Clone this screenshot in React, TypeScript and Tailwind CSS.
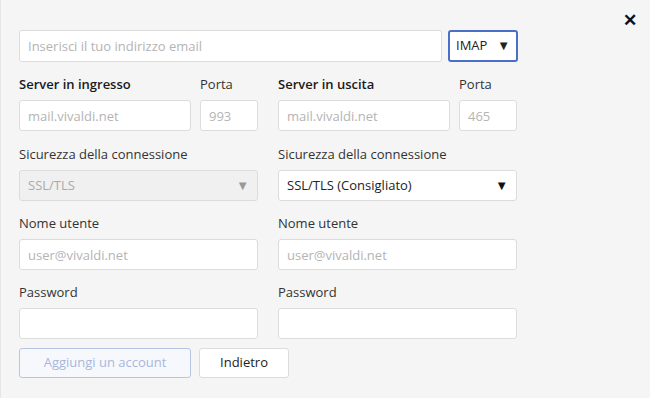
import React from 'react';

const input =
  'h-full w-full rounded-[3px] border border-[#dcdcdc] bg-white px-2 text-[13px] text-[#222] placeholder-[#b4b4b4] outline-none';

function Field({ label, placeholder, bold }: { label: string; placeholder?: string; bold?: boolean }) {
  return (
    <div className="flex flex-1 flex-col">
      <div className={`h-[30px] pt-[5px] text-[13px] ${bold ? 'font-semibold text-[#1a1a1a]' : 'text-[#333]'}`}>{label}</div>
      <div className="h-[31px]">
        <input className={input} placeholder={placeholder} />
      </div>
    </div>
  );
}

function Select({ value, disabled }: { value: string; disabled?: boolean }) {
  return (
    <div
      className={`flex h-[31px] items-center justify-between rounded-[3px] border border-[#dcdcdc] px-2 text-[13px] ${
        disabled ? 'bg-[#f0f0f0] text-[#aaa]' : 'bg-white text-[#222]'
      }`}
    >
      <span>{value}</span>
      <span className={`text-[13px] ${disabled ? 'text-[#999]' : 'text-[#111]'}`}>▼</span>
    </div>
  );
}

function Column({ server }: { server: string }) {
  const sel = server === 'Server in ingresso';
  return (
    <div className="flex w-[239px] flex-col">
      <div className="flex gap-[9px]">
        <div className="w-[172px]"><Field label={server} placeholder="mail.vivaldi.net" bold /></div>
        <Field label="Porta" placeholder={sel ? '993' : '465'} />
      </div>
      <div className="mt-[9px] h-[30px] pt-[5px] text-[13px] text-[#333]">Sicurezza della connessione</div>
      <Select value={sel ? 'SSL/TLS' : 'SSL/TLS (Consigliato)'} disabled={sel} />
      <div className="mt-[8px]"><Field label="Nome utente" placeholder="user@vivaldi.net" /></div>
      <div className="mt-[8px]"><Field label="Password" /></div>
    </div>
  );
}

export default function App() {
  return (
    <div
      className="relative h-[398px] w-[650px] border-l border-[#e6e6e6] bg-[#f5f5f5] px-[18px] pt-[30px]"
      style={{ fontFamily: '"Open Sans", sans-serif' }}
    >
      <button className="absolute right-[13px] top-[7px] text-[17px] font-bold text-[#111]">✕</button>
      <div className="flex gap-[6px]">
        <div className="h-[32px] w-[423px]">
          <input className={input} placeholder="Inserisci il tuo indirizzo email" />
        </div>
        <div className="flex h-[32px] w-[70px] items-center justify-between rounded-[3px] border-2 border-[#4a6fc9] bg-white pl-[6px] pr-[6px] text-[13px] text-[#222]">
          <span>IMAP</span>
          <span className="text-[13px]">▼</span>
        </div>
      </div>
      <div className="mt-[8px] flex gap-[20px]">
        <Column server="Server in ingresso" />
        <Column server="Server in uscita" />
      </div>
      <div className="mt-[9px] flex gap-[8px]">
        <button className="h-[30px] w-[172px] rounded-[3px] border border-[#b8c4e6] bg-[#f7f8fc] text-[13px] text-[#a9b6dc]">
          Aggiungi un account
        </button>
        <button className="h-[30px] w-[90px] rounded-[3px] border border-[#dcdcdc] bg-white text-[13px] text-[#222]">
          Indietro
        </button>
      </div>
    </div>
  );
}
